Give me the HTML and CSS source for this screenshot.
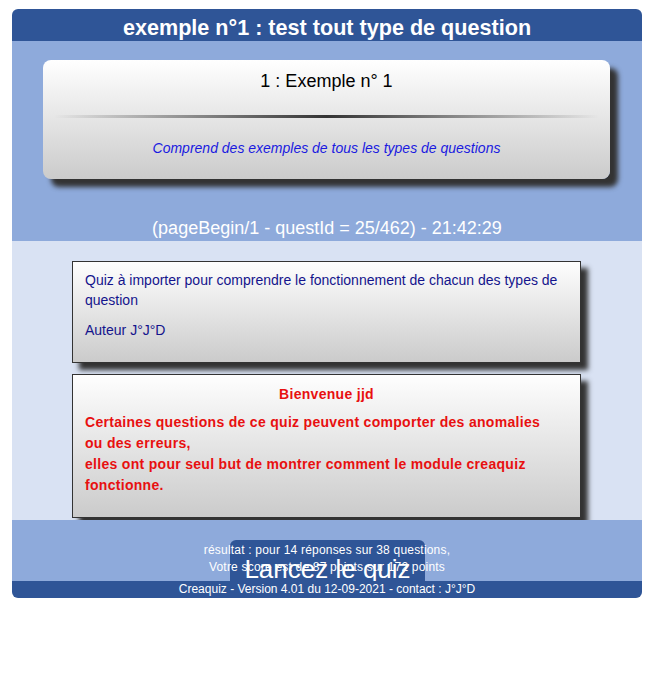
FILE: index.html
```html
<!DOCTYPE html>
<html lang="fr">
<head>
<meta charset="utf-8">
<title>Creaquiz</title>
<link rel="stylesheet" href="styles.css">
</head>
<body>
<div class="page">
  <header class="top">exemple n°1 : test tout type de question</header>
  <section class="intro">
    <div class="card">
      <div class="card-title">1 : Exemple n° 1</div>
      <div class="rule"></div>
      <div class="card-desc">Comprend des exemples de tous les types de questions</div>
    </div>
    <div class="pageinfo">(pageBegin/1 - questId = 25/462) - 21:42:29</div>
  </section>
  <section class="content">
    <div class="box box-info">
      <p>Quiz à importer pour comprendre le fonctionnement de chacun des types de question</p>
      <p>Auteur J°J°D</p>
    </div>
    <div class="box box-warn">
      <p class="welcome">Bienvenue jjd</p>
      <p>Certaines questions de ce quiz peuvent comporter des anomalies ou des erreurs,<br>elles ont pour seul but de montrer comment le module creaquiz fonctionne.</p>
    </div>
  </section>
  <section class="launch">
    <div class="btn">Lancez le quiz</div>
    <div class="result">résultat : pour 14 réponses sur 38 questions,<br>Votre score est de 87 points sur 172 points</div>
  </section>
  <footer class="foot">Creaquiz - Version 4.01 du 12-09-2021 - contact : J°J°D</footer>
</div>
</body>
</html>
```

FILE: styles.css
```css
html, body {
  margin: 0;
  padding: 0;
  background: #fff;
}
body {
  font-family: "Liberation Sans", Arial, sans-serif;
}
.page {
  width: 630px;
  margin: 9px 0 0 12px;
}
.top {
  background: #2f5597;
  color: #fff;
  font-weight: bold;
  font-size: 21.6px;
  height: 32px;
  line-height: 38px;
  text-align: center;
  border-radius: 6px 6px 0 0;
}
.intro {
  background: #8eaadb;
  padding: 19px 0 0;
  height: 200px;
  box-sizing: border-box;
}
.card {
  margin: 0 32px 0 31px;
  height: 119px;
  border-radius: 8px;
  background: linear-gradient(#ffffff, #cbcbcb);
  box-shadow: 8px 8px 5px #333;
  display: flex;
  flex-direction: column;
  align-items: center;
}
.card-title {
  font-size: 18px;
  color: #000;
  margin-top: 11px;
  line-height: 20px;
}
.rule {
  width: 545px;
  height: 3px;
  margin-top: 24px;
  background: linear-gradient(to right, rgba(60,60,60,0), #333 50%, rgba(60,60,60,0));
}
.card-desc {
  font-style: italic;
  font-size: 14px;
  color: #1a1ae0;
  margin-top: 21px;
  line-height: 18px;
}
.pageinfo {
  color: #fff;
  font-size: 18px;
  text-align: center;
  margin-top: 38px;
  line-height: 22px;
}
.content {
  background: #d9e2f3;
  padding: 20px 0 2px;
  height: 279px;
  box-sizing: border-box;
  display: flex;
  flex-direction: column;
  gap: 11px;
}
.box {
  margin: 0 61px 0 60px;
  border: 1px solid #333;
  background: linear-gradient(#fefefe, #cbcbcb);
  box-shadow: 7px 7px 5px #333;
  font-size: 14px;
}
.box p {
  margin: 0 0 10px;
}
.box-info {
  height: 102px;
  padding: 8px 12px 0 12px;
  box-sizing: border-box;
  color: #14148c;
  line-height: 20px;
}
.box-warn {
  height: 144px;
  padding: 9px 22px 0 12px;
  box-sizing: border-box;
  color: #e81010;
  font-weight: bold;
  line-height: 21px;
  letter-spacing: 0.3px;
}
.box-warn .welcome {
  text-align: center;
  line-height: 20px;
  margin: 0 0 8px 10px;
}
.launch {
  position: relative;
  background: #8eaadb;
  height: 61px;
  padding-top: 20px;
  box-sizing: border-box;
  display: flex;
  justify-content: center;
}
.btn {
  width: 195px;
  height: 58px;
  margin-left: 1px;
  background: #2f5597;
  color: #fff;
  font-size: 26px;
  line-height: 58px;
  text-align: center;
  border-radius: 6px 6px 0 0;
  flex: none;
}
.result {
  position: absolute;
  top: 22px;
  left: 0;
  right: 0;
  text-align: center;
  color: #fff;
  font-size: 12px;
  line-height: 17px;
  letter-spacing: 0.2px;
}
.foot {
  position: relative;
  background: #2f5597;
  color: #fff;
  font-size: 12px;
  height: 17px;
  line-height: 17px;
  text-align: center;
  border-radius: 0 0 6px 6px;
}
```
